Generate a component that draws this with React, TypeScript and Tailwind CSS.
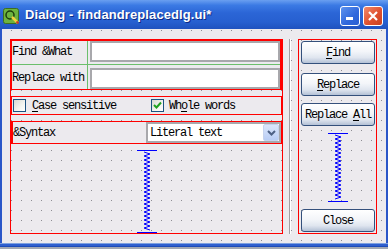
import React from "react";

const mono =
  "font-['Liberation_Mono','DejaVu_Sans_Mono',monospace] text-[12px] tracking-[-1.2px] text-black leading-none whitespace-pre";

function Spring({ h }: { h: number }) {
  const pts: string[] = [];
  let left = true;
  for (let y = 2; y <= h - 2; y += 2) {
    pts.push(`${left ? 7 : 13},${y}`);
    left = !left;
  }
  return (
    <svg width={20} height={h} className="block">
      <line x1={0} y1={0.5} x2={20} y2={0.5} stroke="#0000ff" />
      <line x1={0} y1={h - 0.5} x2={20} y2={h - 0.5} stroke="#0000ff" />
      <polyline points={pts.join(" ")} fill="none" stroke="#0000ff" strokeWidth={1} />
    </svg>
  );
}

function Check({ checked }: { checked?: boolean }) {
  return (
    <div className="w-[13px] h-[13px] border border-[#1c5180] bg-[linear-gradient(135deg,#d8d8d2,#f4f4f0_60%,#ffffff)] flex items-center justify-center">
      {checked && (
        <svg width={9} height={9} viewBox="0 0 9 9">
          <path d="M1 4 L3.5 6.5 L8 1.5" fill="none" stroke="#21a121" strokeWidth={2} />
        </svg>
      )}
    </div>
  );
}

function XpButton({ children, className = "" }: { children: React.ReactNode; className?: string }) {
  return (
    <div
      className={`w-[74px] h-[23px] rounded-[3px] border border-[#34507c] bg-[linear-gradient(180deg,#ffffff_0%,#f3f5f9_45%,#dfe5ef_75%,#b4c1d6_100%)] flex items-center justify-center ${className}`}
    >
      <span className={mono}>{children}</span>
    </div>
  );
}

export default function App() {
  return (
    <div className="w-[388px] h-[249px] overflow-hidden bg-[#a2a8b4] flex flex-col">
      {/* title bar */}
      <div className="h-[29px] shrink-0 relative bg-[linear-gradient(180deg,#6a9ff0_0%,#3b7ae4_18%,#2b65d6_45%,#2760d0_75%,#1f52bf_100%)] flex items-center">
        <svg width={16} height={16} viewBox="0 0 16 16" className="ml-[3px] mt-[2px]">
          <rect x={0.5} y={0.5} width={15} height={15} rx={2} fill="#6db33f" stroke="#3d6e1f" />
          <circle cx={7} cy={7} r={4} fill="none" stroke="#1d3e0c" strokeWidth={1.5} />
          <path d="M9 9 L15 15" stroke="#f4d03f" strokeWidth={2.5} />
          <path d="M13.5 13.5 L15.5 15.5" stroke="#c0392b" strokeWidth={2} />
        </svg>
        <span className="ml-[6px] font-['Liberation_Sans',Arial,sans-serif] font-bold text-[13px] text-white [text-shadow:1px_1px_#0d2a86] tracking-[0.1px]">
          Dialog - findandreplacedlg.ui*
        </span>
        <div className="absolute left-[340px] top-[6px] w-[20px] h-[20px] rounded-[3px] border border-white bg-[linear-gradient(135deg,#5d93ee,#2f67dc_60%,#2a5fd2)] flex items-end pl-[5px] pb-[5px]">
          <div className="w-[7px] h-[3px] bg-white" />
        </div>
        <div className="absolute left-[363px] top-[6px] w-[20px] h-[20px] rounded-[3px] border border-white bg-[linear-gradient(135deg,#f08a6c,#e0512f_55%,#c8401f)] flex items-center justify-center">
          <svg width={12} height={12} viewBox="0 0 12 12">
            <path d="M2 2 L10 10 M10 2 L2 10" stroke="#ffffff" strokeWidth={2.2} />
          </svg>
        </div>
      </div>

      {/* body */}
      <div className="flex h-[214px] shrink-0">
        <div className="w-[2px] bg-[#2a56c8]" />
        <div className="flex-1 bg-[#eceaee] bg-[conic-gradient(at_1px_1px,transparent_270deg,#8e8e94_0)] bg-[length:10px_10px] bg-[position:9px_1px] flex pl-[8px] pt-[10px]">
          {/* left layout */}
          <div className="w-[273px] h-[195px] border border-[#ff0000] flex flex-col">
            <div className="h-[50px] border border-[#ff0000] border-r-2 flex flex-col bg-[#eceaee]">
              <div className="h-[23px] flex">
                <div className="w-[76px] border-r border-[#6cbf6c] flex items-center pb-[1px]">
                  <span className={mono}>
                    Find &amp;What
                  </span>
                </div>
                <div className="ml-[2px] w-[191px] h-[21px] bg-white border-2 border-[#a8a8ac]" />
              </div>
              <div className="h-px bg-[#6cbf6c]" />
              <div className="h-[24px] flex">
                <div className="w-[76px] border-r border-[#6cbf6c] flex items-center pt-[2px]">
                  <span className={mono}>Replace with</span>
                </div>
                <div className="ml-[2px] mt-[3px] w-[191px] h-[21px] bg-white border-2 border-[#a8a8ac]" />
              </div>
            </div>
            <div className="mt-[6px] h-[19px] border border-[#ff0000] flex items-center bg-[#eceaee]">
              <div className="w-[139px] flex items-center pl-[1px]">
                <Check />
                <span className={`${mono} ml-[6px]`}>
                  <span className="underline underline-offset-2">C</span>ase sensitive
                </span>
              </div>
              <div className="flex items-center">
                <Check checked />
                <span className={`${mono} ml-[5px]`}>
                  Wh<span className="underline underline-offset-2">o</span>le words
                </span>
              </div>
            </div>
            <div className="mt-[6px] h-[23px] border border-[#ff0000] border-l-2 flex items-center bg-[#eceaee]">
              <span className={`${mono} w-[133px]`}>&amp;Syntax</span>
              <div className="w-[135px] h-[21px] bg-white border-2 border-[#a8a8ac] flex items-center">
                <span className={`${mono} ml-[2px] flex-1`}>Literal text</span>
                <div className="w-[16px] h-[17px] mr-[0px] rounded-[2px] border border-[#c6d3ee] bg-[linear-gradient(180deg,#dbe6fb,#b9cdf5)] flex items-center justify-center">
                  <svg width={9} height={6} viewBox="0 0 9 6">
                    <path d="M1 1 L4.5 4.5 L8 1" fill="none" stroke="#4d6185" strokeWidth={2} />
                  </svg>
                </div>
              </div>
            </div>
            <div className="mt-[6px] flex-1 flex justify-center">
              <Spring h={83} />
            </div>
          </div>

          {/* separator */}
          <div className="ml-[6px] w-[2px] h-[195px] flex">
            <div className="w-px bg-[#a0a0a4]" />
            <div className="w-px bg-white" />
          </div>

          {/* right layout */}
          <div className="ml-[7px] w-[79px] h-[195px] border border-[#ff0000] flex flex-col items-start pl-[2px] pt-[1px]">
            <XpButton>
              <span className="underline underline-offset-2">F</span>ind
            </XpButton>
            <XpButton className="mt-[9px]">
              <span className="underline underline-offset-2">R</span>eplace
            </XpButton>
            <XpButton className="mt-[7px]">
              Replace <span className="underline underline-offset-2">A</span>ll
            </XpButton>
            <div className="mt-[7px] w-[74px] flex justify-center">
              <Spring h={69} />
            </div>
            <XpButton className="mt-[7px]">Close</XpButton>
          </div>
        </div>
        <div className="w-[2px] bg-[#2a56c8]" />
      </div>

      {/* bottom frame */}
      <div className="h-px bg-[#7ea0e0]" />
      <div className="h-[2px] bg-[#2f5fcf]" />
      <div className="h-px bg-[#1d4bb8]" />
    </div>
  );
}
